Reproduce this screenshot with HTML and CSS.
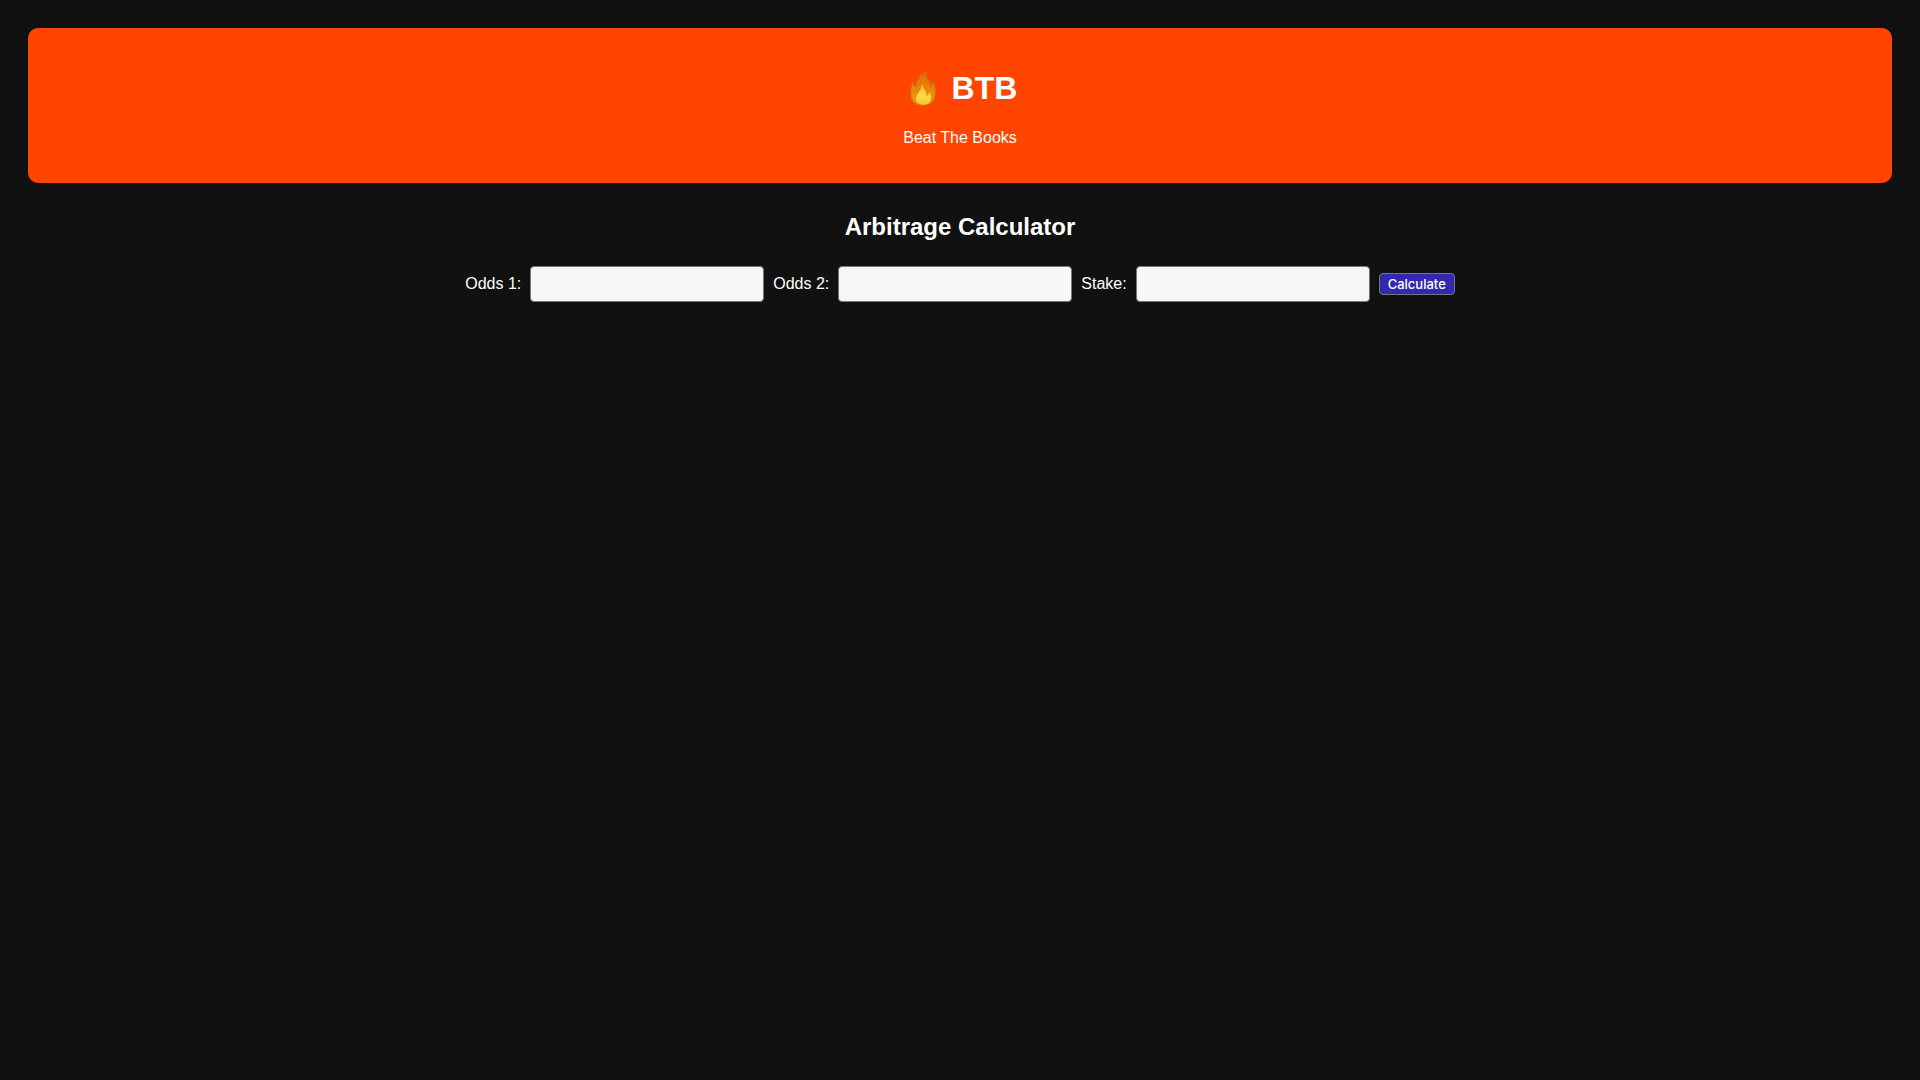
FILE: index.html
```html
<!DOCTYPE html>
<html lang="en">
<head>
<meta charset="utf-8">
<title>BTB - Beat The Books</title>
<link rel="stylesheet" href="styles.css">
</head>
<body>
<header class="banner">
<h1 class="brand">
<svg class="flame" viewBox="-21 -8 120 114" aria-hidden="true">
<defs>
<linearGradient id="outer" x1="0" y1="0" x2="0" y2="1">
<stop offset="0" stop-color="#e66a00"/>
<stop offset="1" stop-color="#f39a12"/>
</linearGradient>
<linearGradient id="inner" x1="0" y1="0" x2="0" y2="1">
<stop offset="0" stop-color="#f7b528"/>
<stop offset="0.6" stop-color="#fbdc48"/>
<stop offset="1" stop-color="#f5c62c"/>
</linearGradient>
</defs>
<path d="M48 2C45 18 64 29 62 46C67 43 69 36 67 28C74 39 77 51 76 66C75 89 60 101 39 101C17 101 2 89 2 67C2 52 4 42 9 29C10 38 13 43 18 45C19 25 28 9 48 2Z" fill="url(#outer)" stroke="#b97a10" stroke-width="3"/>
<path d="M36 32C35 49 53 56 49 74C55 72 58 67 57 59C69 76 64 99 41 99C22 99 14 86 20 73C25 62 36 53 36 32Z" fill="url(#inner)"/>
</svg>
BTB
</h1>
<p class="tagline">Beat The Books</p>
</header>
<main>
<h2 class="title">Arbitrage Calculator</h2>
<form class="calculator">
<label for="odds1">Odds 1:</label>
<input id="odds1" class="field" type="text">
<label for="odds2">Odds 2:</label>
<input id="odds2" class="field" type="text">
<label for="stake">Stake:</label>
<input id="stake" class="field" type="text">
<button class="submit" type="button">Calculate</button>
</form>
</main>
</body>
</html>
```
FILE: styles.css
```css
body {
  margin: 0;
  padding: 28px;
  background: #111;
  color: #fff;
  font: 16px "Liberation Sans", sans-serif;
  text-align: center;
}
.banner {
  padding: 20px;
  border-radius: 10px;
  background: #ff4500;
}
.brand {
  display: flex;
  justify-content: center;
  align-items: center;
  gap: 9px;
  margin: 21px 0 22px;
  font-size: 32px;
  line-height: 38px;
}
.flame {
  width: 40px;
  height: 38px;
}
.tagline {
  margin: 16px 0;
}
.title {
  margin: 30px 0 25px;
  font-size: 24px;
}
.calculator {
  display: flex;
  flex-wrap: wrap;
  justify-content: center;
  align-items: center;
  gap: 9px;
}
.field {
  box-sizing: border-box;
  width: 234px;
  height: 36px;
  padding: 8px;
  border: 1px solid #767676;
  border-radius: 4px;
  background: #f7f7f7;
}
.submit {
  padding: 2px 8px;
  border: 1px solid #767676;
  border-radius: 4px;
  background: #3329b0;
  color: #fff;
  font: 500 13px/16px Inter, sans-serif;
}
```
